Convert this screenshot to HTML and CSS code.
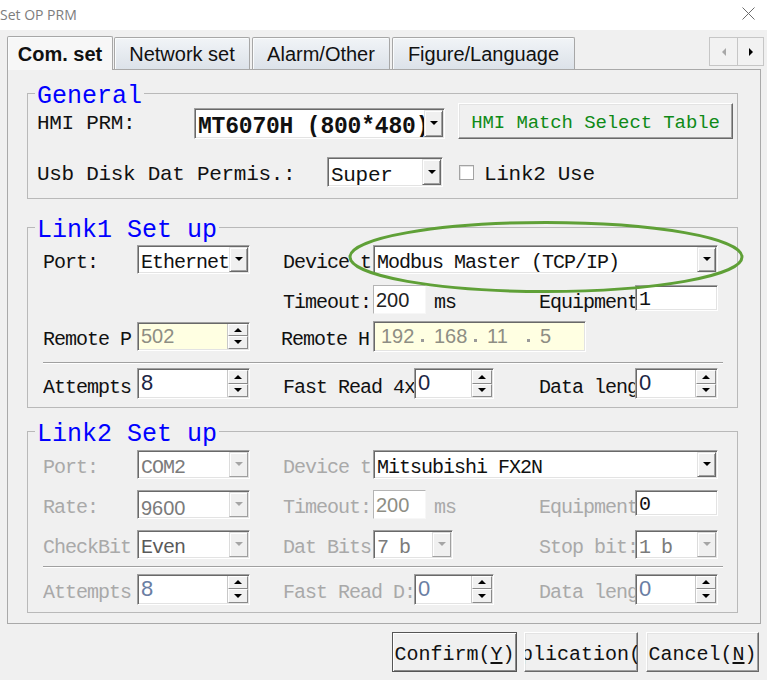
FILE: index.html
```html
<!DOCTYPE html>
<html>
<head>
<meta charset="utf-8">
<title>Set OP PRM</title>
<link rel="stylesheet" href="styles.css">
</head>
<body>
<div class="win">
  <div class="titlebar">
    <span class="title">Set OP PRM</span>
    <svg class="close" width="13" height="13" viewBox="0 0 13 13"><path d="M0.5 0.5L12.5 12.5M12.5 0.5L0.5 12.5" stroke="#6b6b6b" stroke-width="1" fill="none"/></svg>
  </div>

  <div class="tabbar">
    <div class="tab sel">Com. set</div>
    <div class="tab w-net">Network set</div>
    <div class="tab w-alarm">Alarm/Other</div>
    <div class="tab w-fig">Figure/Language</div>
    <div class="tabscroll">
      <span class="tsb"><i class="tri-l"></i></span>
      <span class="tsb last"><i class="tri-r"></i></span>
    </div>
  </div>

  <div class="panel">
    <fieldset class="grp gen">
      <legend>General</legend>
      <div class="grow g1">
        <span class="glbl gl1">HMI PRM:</span>
        <div class="sunk combo hmi"><span class="ct ct-bold">MT6070H (800*480)</span><span class="drop"><i class="tri-d"></i></span></div>
        <div class="raised btn-match">HMI Match Select Table</div>
      </div>
      <div class="grow g2">
        <span class="glbl gl2">Usb Disk Dat Permis.:</span>
        <div class="sunk combo super"><span class="ct ct-gen">Super</span><span class="drop"><i class="tri-d"></i></span></div>
        <span class="chk"></span>
        <span class="glbl chk-l">Link2 Use</span>
      </div>
    </fieldset>

    <fieldset class="grp link link1">
      <legend>Link1 Set up</legend>
      <div class="lrow r1">
        <span class="lbl l1">Port:</span>
        <div class="sunk combo c1"><span class="ct">Ethernet</span><span class="drop"><i class="tri-d"></i></span></div>
        <span class="lbl l2">Device type</span>
        <div class="sunk combo cdev"><span class="ct">Modbus Master (TCP/IP)</span><span class="drop"><i class="tri-d"></i></span></div>
      </div>
      <div class="lrow r2">
        <span class="lbl l1"></span>
        <span class="c1"></span>
        <span class="lbl l2">Timeout:</span>
        <div class="inlight itime"><span class="num">200</span></div>
        <span class="lbl ms">ms</span>
        <span class="lbl l3">Equipment No.</span>
        <div class="sunk ieq"><span class="ct">1</span></div>
      </div>
      <div class="lrow r3">
        <span class="lbl l1">Remote Port</span>
        <div class="sunk spin c1 yellow"><span class="num dim">502</span><span class="sbtns"><span class="sb"><i class="tri-u"></i></span><span class="sb"><i class="tri-d"></i></span></span></div>
        <span class="lbl l2 l2h">Remote Host</span>
        <div class="sunk ip yellow">
          <span class="oct">192</span><span class="dot"></span>
          <span class="oct">168</span><span class="dot"></span>
          <span class="oct">11</span><span class="dot"></span>
          <span class="oct">5</span>
        </div>
      </div>
      <div class="sep s1"></div>
      <div class="lrow r4">
        <span class="lbl l1">Attempts</span>
        <div class="sunk spin c1 tall"><span class="num big">8</span><span class="sbtns"><span class="sb"><i class="tri-u"></i></span><span class="sb"><i class="tri-d"></i></span></span></div>
        <span class="lbl l2w">Fast Read 4x</span>
        <div class="sunk spin sfr tall"><span class="num big">0</span><span class="sbtns"><span class="sb"><i class="tri-u"></i></span><span class="sb"><i class="tri-d"></i></span></span></div>
        <span class="lbl l3 gap45">Data length</span>
        <div class="sunk spin c3 tall"><span class="num big">0</span><span class="sbtns"><span class="sb"><i class="tri-u"></i></span><span class="sb"><i class="tri-d"></i></span></span></div>
      </div>
    </fieldset>

    <fieldset class="grp link link2 off">
      <legend>Link2 Set up</legend>
      <div class="lrow r1">
        <span class="lbl l1">Port:</span>
        <div class="sunk combo c1 dis"><span class="ct">COM2</span><span class="drop"><i class="tri-d"></i></span></div>
        <span class="lbl l2">Device type</span>
        <div class="sunk combo cdev"><span class="ct on">Mitsubishi FX2N</span><span class="drop"><i class="tri-d"></i></span></div>
      </div>
      <div class="lrow r2">
        <span class="lbl l1">Rate:</span>
        <div class="sunk combo c1 dis"><span class="ct sans">9600</span><span class="drop"><i class="tri-d"></i></span></div>
        <span class="lbl l2">Timeout:</span>
        <div class="inlight itime"><span class="num dim">200</span></div>
        <span class="lbl ms">ms</span>
        <span class="lbl l3">Equipment No.</span>
        <div class="sunk ieq"><span class="ct">0</span></div>
      </div>
      <div class="lrow r3">
        <span class="lbl l1">CheckBit</span>
        <div class="sunk combo c1 dis"><span class="ct dk">Even</span><span class="drop"><i class="tri-d"></i></span></div>
        <span class="lbl l2">Dat Bits</span>
        <div class="sunk combo cbits dis"><span class="ct">7 b</span><span class="drop"><i class="tri-d"></i></span></div>
        <span class="lbl l3 gap86">Stop bit:</span>
        <div class="sunk combo c3 dis"><span class="ct">1 b</span><span class="drop"><i class="tri-d"></i></span></div>
      </div>
      <div class="sep s2"></div>
      <div class="lrow r4">
        <span class="lbl l1">Attempts</span>
        <div class="sunk spin c1 tall"><span class="num big blu">8</span><span class="sbtns"><span class="sb"><i class="tri-u"></i></span><span class="sb"><i class="tri-d"></i></span></span></div>
        <span class="lbl l2w">Fast Read D:</span>
        <div class="sunk spin sfr tall"><span class="num big blu">0</span><span class="sbtns"><span class="sb"><i class="tri-u"></i></span><span class="sb"><i class="tri-d"></i></span></span></div>
        <span class="lbl l3 gap45">Data length</span>
        <div class="sunk spin c3 tall"><span class="num big blu">0</span><span class="sbtns"><span class="sb"><i class="tri-u"></i></span><span class="sb"><i class="tri-d"></i></span></span></div>
      </div>
    </fieldset>
  </div>

  <div class="btnrow">
    <div class="raised bbtn b-ok def"><span>Confirm(<u>Y</u>)</span></div>
    <div class="raised bbtn b-app"><span>Application(<u>A</u>)</span></div>
    <div class="raised bbtn b-cancel"><span>Cancel(<u>N</u>)</span></div>
  </div>

  <svg class="mark" width="400" height="76" viewBox="0 0 400 76"><ellipse cx="199" cy="37" rx="196" ry="34.5" fill="none" stroke="#5fa037" stroke-width="3"/></svg>
</div>
</body>
</html>
```

FILE: styles.css
```css
* { box-sizing: border-box; }
html, body { margin: 0; padding: 0; }
body {
  background: #f0f0f0;
  font-family: "Liberation Mono", "DejaVu Sans Mono", monospace;
  color: #111;
}
.win {
  position: relative;
  width: 767px;
  height: 680px;
  overflow: hidden;
}

/* title bar */
.titlebar {
  height: 30px;
  background: #fff;
  display: flex;
  align-items: center;
  justify-content: space-between;
  padding-right: 12px;
}
.title {
  font-family: "Open Sans", "Liberation Sans", sans-serif;
  font-size: 14px;
  color: #7d7d7d;
  margin-top: -2px;
}
.close { margin-top: -3px; }

/* tabs */
.tabbar {
  display: flex;
  align-items: flex-end;
  height: 33px;
  margin-top: 6px;
  padding-left: 7px;
  padding-right: 3px;
}
.tab {
  height: 32px;
  border: 1px solid #a7a7a7;
  border-bottom: none;
  border-radius: 2px 2px 0 0;
  font-family: "Liberation Sans", Arial, sans-serif;
  font-size: 20px;
  color: #111;
  display: flex;
  align-items: center;
  justify-content: center;
  padding-top: 2px;
  background: linear-gradient(#f1f4f7, #dce2e9);
  box-shadow: inset 1px 1px 0 #fafcfd;
}
.tab.sel {
  width: 106px;
  height: 34px;
  margin-bottom: -1px;
  padding-top: 1px;
  font-weight: bold;
  background: #f7f7f7;
  position: relative;
  z-index: 1;
}
.w-net { width: 136px; margin-left: 1px; }
.w-alarm { width: 138px; margin-left: 2px; }
.w-fig { width: 183px; margin-left: 2px; }
.tabscroll {
  margin-left: auto;
  align-self: flex-start;
  margin-top: 1px;
  display: flex;
  height: 29px;
  border: 1px solid #c6c6c6;
  background: #f2f2f2;
}
.tsb {
  width: 27px;
  display: flex;
  align-items: center;
  justify-content: center;
}
.tsb.last { border-left: 1px solid #c6c6c6; width: 26px; }
.tri-l {
  width: 0; height: 0;
  border-top: 4px solid transparent;
  border-bottom: 4px solid transparent;
  border-right: 4px solid #a8a8a8;
}
.tri-r {
  width: 0; height: 0;
  border-top: 4px solid transparent;
  border-bottom: 4px solid transparent;
  border-left: 4px solid #000;
}

/* panel */
.panel {
  margin: 0 6px 0 7px;
  border: 1px solid #a9a9a9;
  padding: 12px 22px 10px 19px;
}

/* group boxes */
.grp {
  margin: 0;
  padding: 0;
  border: 1px solid #b9b9b9;
  min-width: 0;
}
.grp legend {
  margin-left: 7px;
  padding: 0 2px;
  height: 22px;
  line-height: 30px;
  font-size: 25px;
  color: #0000ff;
  font-family: "Liberation Mono", monospace;
}
.link1 { margin-top: 17px; padding: 6px 0 8px; }
.link2 { margin-top: 12px; padding: 7px 0 8px; }
.gen { padding: 0 0 11px; }

/* general rows */
.grow {
  display: flex;
  align-items: center;
  padding-left: 9px;
  font-size: 21px;
  letter-spacing: -0.3px;
}
.g1 { height: 35px; }
.g2 { height: 30px; margin-top: 18px; }
.glbl { white-space: nowrap; line-height: 21px; padding-top: 4px; flex: none; }
.gl1 { width: 157px; }
.gl2 { width: 290px; }
.hmi { width: 251px; height: 31px; margin-top: 3px; }
.super { width: 116px; height: 30px; }
.ct-bold {
  font-weight: bold;
  font-size: 23px;
  letter-spacing: -0.2px;
  line-height: 23px;
  padding-top: 5px;
}
.ct-gen { line-height: 21px; padding-top: 5px; padding-left: 4px; }
.btn-match {
  width: 275px;
  height: 36px;
  margin-left: 13px;
  margin-top: -1px;
  display: flex;
  align-items: center;
  justify-content: center;
  font-size: 19px;
  letter-spacing: -0.1px;
  line-height: 19px;
  padding-top: 5px;
  color: #0f8a17;
}
.chk {
  width: 15px;
  height: 15px;
  margin-left: 16px;
  background: #fff;
  border: 1px solid #a3a3a3;
  box-shadow: inset 1px 1px 0 #e3e3e3;
  flex: none;
}
.chk-l { margin-left: 10px; }

/* 3D styles */
.sunk {
  background: #fff;
  border: 1px solid;
  border-color: #a0a0a0 #fff #fff #a0a0a0;
  box-shadow: inset 1px 1px 0 #696969, inset -1px -1px 0 #e3e3e3;
  padding: 1px;
}
.raised {
  background: #f0f0f0;
  border: 1px solid;
  border-color: #fff #696969 #696969 #fff;
  box-shadow: inset -1px -1px 0 #a0a0a0, inset 1px 1px 0 #e3e3e3;
}
.yellow { background: #ffffe2; }
.inlight {
  background: #fff;
  border: 1px solid;
  border-color: #b4b4b4 #f7f7f7 #f7f7f7 #b4b4b4;
  display: flex;
  align-items: center;
}

/* combos */
.combo { display: flex; align-items: center; flex: none; }
.ct {
  flex: 1;
  min-width: 0;
  overflow: hidden;
  white-space: nowrap;
  line-height: 20px;
  padding: 8px 0 0 2px;
}
.drop {
  width: 19px;
  align-self: stretch;
  flex: none;
  background: #f0f0f0;
  border: 1px solid;
  border-color: #e3e3e3 #696969 #696969 #e3e3e3;
  box-shadow: inset 1px 1px 0 #fff, inset -1px -1px 0 #a0a0a0;
  display: flex;
  align-items: center;
  justify-content: center;
}
.tri-d {
  width: 0; height: 0;
  border-left: 4px solid transparent;
  border-right: 4px solid transparent;
  border-top: 4px solid #000;
}
.tri-u {
  width: 0; height: 0;
  border-left: 4px solid transparent;
  border-right: 4px solid transparent;
  border-bottom: 4px solid #000;
}
.dis .ct { color: #7b7b7b; }
.dis .ct.dk { color: #5a5a5a; }
.dis .tri-d { border-top-color: #a5a5a5; }
.dis .drop {
  border-color: #dcdcdc #a0a0a0 #a0a0a0 #dcdcdc;
  box-shadow: inset 1px 1px 0 #fff;
}
.sans { font-family: "Liberation Sans", Arial, sans-serif; letter-spacing: 0; }

/* link rows */
.lrow {
  display: flex;
  align-items: center;
  height: 30px;
  padding-left: 15px;
  font-size: 20px;
  letter-spacing: -1px;
}
.link1 .r2 { margin-top: 10px; }
.link1 .r3 { margin-top: 7px; }
.link1 .r4 { height: 31px; }
.link2 .r2, .link2 .r3 { margin-top: 10px; }
.lbl {
  white-space: nowrap;
  overflow: hidden;
  line-height: 20px;
  padding-top: 8px;
  flex: none;
}
.link2 .lbl { color: #a9a9a9; }
.l1 { width: 89px; margin-right: 5px; }
.c1 { width: 113px; height: 29px; flex: none; }
.l2 { width: 88px; margin-left: 33px; margin-right: 2px; }
.l2h { margin-left: 31px; width: 88px; margin-right: 4px; }
.l2w { width: 131px; margin-left: 33px; }
.l3 { width: 96px; }
.ms { width: 105px; margin-left: 8px; }
.gap45 { margin-left: 45px; }
.gap86 { margin-left: 86px; }
.cdev { width: 345px; height: 29px; }
.cbits { width: 80px; height: 29px; }
.c3 { width: 83px; height: 29px; flex: none; }
.itime { width: 53px; height: 29px; flex: none; }
.ieq { width: 83px; height: 26px; flex: none; display: flex; align-self: flex-start; margin-top: 1px; }
.ieq .ct { padding-top: 3px; }
.link2 .ct.on { color: #111; }

/* spinners */
.spin { display: flex; align-items: center; }
.spin.tall { height: 31px; }
.sfr { width: 80px; flex: none; }
.num {
  flex: 1;
  min-width: 0;
  font-family: "Liberation Sans", Arial, sans-serif;
  font-size: 20px;
  letter-spacing: 0;
  padding-left: 2px;
  color: #222;
}
.itime .num { padding-top: 3px; }
.num.dim { color: #8e8e84; }
.num.big { font-size: 22px; color: #1c2544; align-self: flex-start; padding-top: 0; }
.num.blu { color: #6a7ea3; }
.sbtns {
  width: 21px;
  align-self: stretch;
  display: flex;
  flex-direction: column;
  flex: none;
  border-left: 1px solid #c8c8c8;
}
.sb {
  flex: 1;
  background: #f0f0f0;
  border: 1px solid;
  border-color: #fff #8a8a8a #8a8a8a #fff;
  display: flex;
  align-items: center;
  justify-content: center;
}

/* ip */
.ip {
  width: 213px;
  height: 31px;
  display: flex;
  align-items: center;
  padding-left: 7px;
  font-family: "Liberation Sans", Arial, sans-serif;
  font-size: 20px;
  letter-spacing: 0;
  color: #8e8e84;
}
.oct { width: 40px; }
.dot {
  width: 3px;
  height: 3px;
  background: #9a9a9a;
  margin: 9px 10px 0 0;
}

/* separators */
.sep {
  margin-left: 15px;
  width: 680px;
  border-top: 1px solid #a0a0a0;
  border-bottom: 1px solid #fff;
}
.s1 { margin-top: 11px; margin-bottom: 4px; }
.s2 { margin-top: 7px; margin-bottom: 6px; }

/* bottom buttons */
.btnrow {
  display: flex;
  justify-content: flex-end;
  margin-top: 8px;
  padding-right: 8px;
}
.bbtn {
  height: 40px;
  display: flex;
  align-items: center;
  justify-content: center;
  overflow: hidden;
  white-space: nowrap;
  font-size: 20px;
  line-height: 20px;
  padding-top: 6px;
  color: #111;
}
.bbtn u { text-underline-offset: 2px; }
.b-ok { width: 125px; }
.b-ok.def { border-color: #555; box-shadow: inset 1px 1px 0 #fff, inset -1px -1px 0 #8a8a8a; }
.b-app { width: 114px; margin-left: 7px; }
.b-cancel { width: 113px; margin-left: 8px; }

/* annotation */
.mark {
  position: absolute;
  left: 347px;
  top: 220px;
  pointer-events: none;
}
```
